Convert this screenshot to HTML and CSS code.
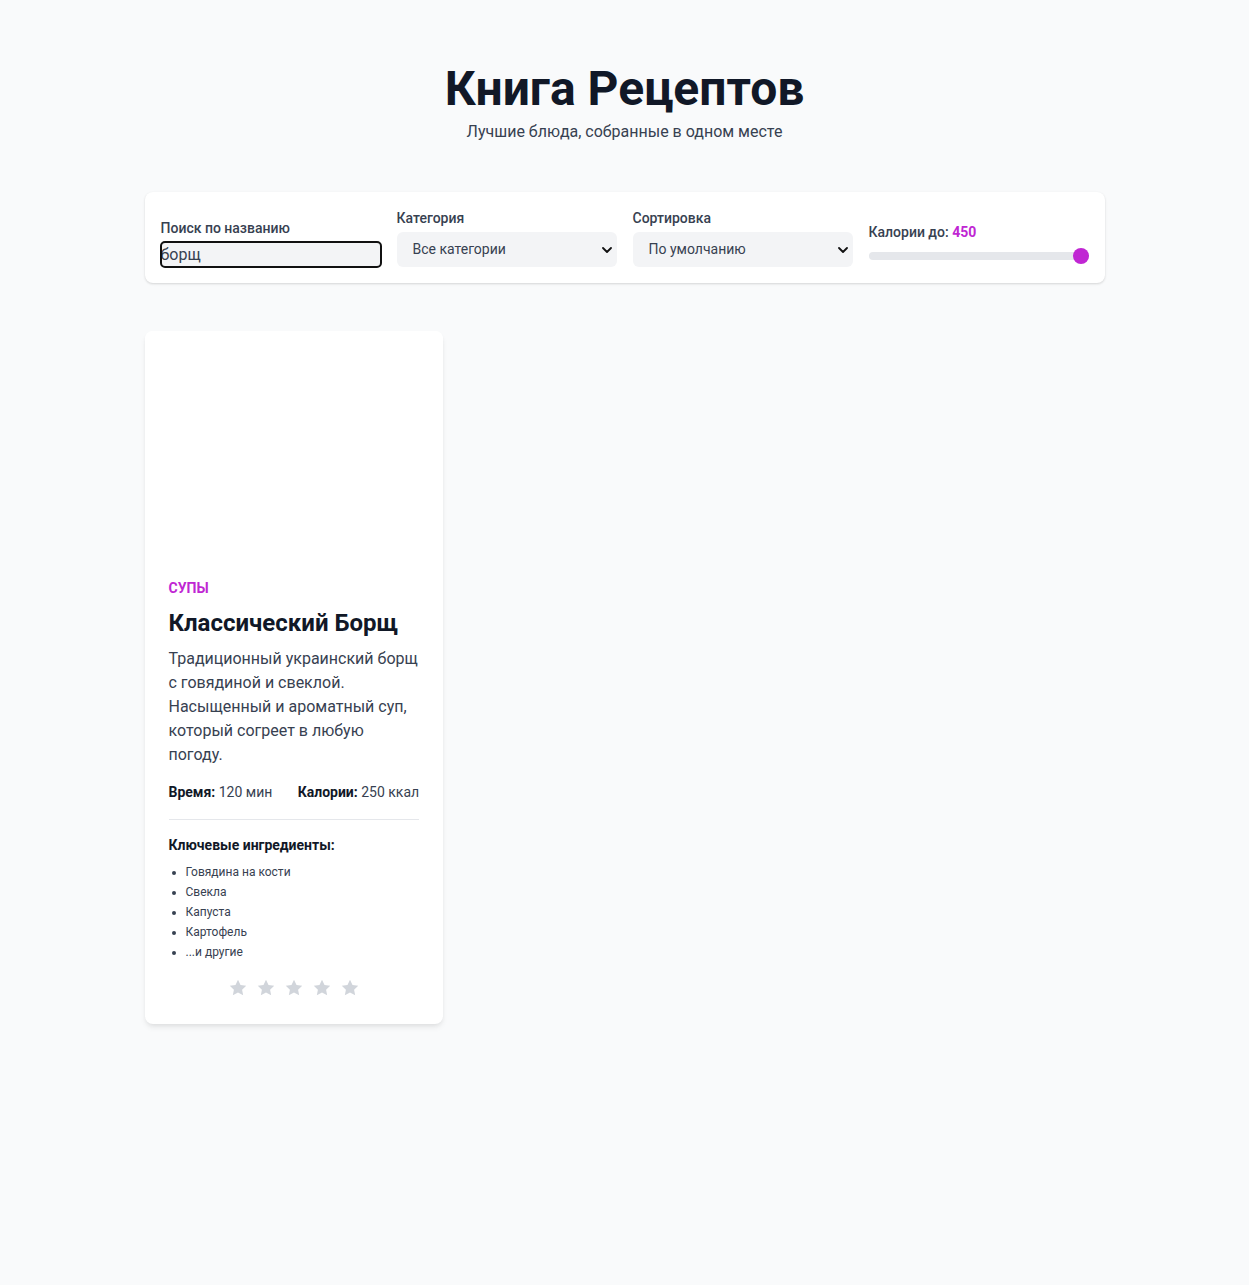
FILE: index.html
```html
<!DOCTYPE html>
<html lang="ru">
<head>
<meta charset="utf-8">
<title>Книга Рецептов</title>
<link rel="stylesheet" href="styles.css">
</head>
<body>
<div class="page">
  <header class="hero">
    <h1 class="hero-title">Книга Рецептов</h1>
    <p class="hero-sub">Лучшие блюда, собранные в одном месте</p>
  </header>

  <section class="filters">
    <div class="field">
      <label class="field-label" for="search">Поиск по названию</label>
      <input id="search" class="search-input" type="text" value="борщ">
    </div>
    <div class="field">
      <label class="field-label" for="cat">Категория</label>
      <div class="select-wrap">
        <select id="cat" class="select"><option>Все категории</option></select>
        <svg class="chev" viewBox="0 0 10 6" width="10" height="6"><path d="M1 1l4 4 4-4" fill="none" stroke="#111" stroke-width="1.8" stroke-linecap="round" stroke-linejoin="round"/></svg>
      </div>
    </div>
    <div class="field">
      <label class="field-label" for="sort">Сортировка</label>
      <div class="select-wrap">
        <select id="sort" class="select"><option>По умолчанию</option></select>
        <svg class="chev" viewBox="0 0 10 6" width="10" height="6"><path d="M1 1l4 4 4-4" fill="none" stroke="#111" stroke-width="1.8" stroke-linecap="round" stroke-linejoin="round"/></svg>
      </div>
    </div>
    <div class="field">
      <label class="field-label" for="cal">Калории до: <span class="accent">450</span></label>
      <input id="cal" class="range" type="range" min="0" max="450" value="450">
    </div>
  </section>

  <section class="grid">
    <article class="card">
      <div class="card-img"></div>
      <div class="card-body">
        <div class="card-cat">Супы</div>
        <h2 class="card-title">Классический Борщ</h2>
        <p class="card-desc">Традиционный украинский борщ с говядиной и свеклой. Насыщенный и ароматный суп, который согреет в любую погоду.</p>
        <div class="meta">
          <span><b>Время:</b> 120 мин</span>
          <span><b>Калории:</b> 250 ккал</span>
        </div>
        <div class="ingredients">
          <h3 class="ing-title">Ключевые ингредиенты:</h3>
          <ul class="ing-list">
            <li>Говядина на кости</li>
            <li>Свекла</li>
            <li>Капуста</li>
            <li>Картофель</li>
            <li>...и другие</li>
          </ul>
        </div>
        <div class="stars">
          <svg class="star" viewBox="0 0 24 24"><path d="M12 2l3 6.3 6.9.9-5 4.8 1.3 6.8L12 17.5l-6.2 3.3 1.3-6.8-5-4.8 6.9-.9z"/></svg>
          <svg class="star" viewBox="0 0 24 24"><path d="M12 2l3 6.3 6.9.9-5 4.8 1.3 6.8L12 17.5l-6.2 3.3 1.3-6.8-5-4.8 6.9-.9z"/></svg>
          <svg class="star" viewBox="0 0 24 24"><path d="M12 2l3 6.3 6.9.9-5 4.8 1.3 6.8L12 17.5l-6.2 3.3 1.3-6.8-5-4.8 6.9-.9z"/></svg>
          <svg class="star" viewBox="0 0 24 24"><path d="M12 2l3 6.3 6.9.9-5 4.8 1.3 6.8L12 17.5l-6.2 3.3 1.3-6.8-5-4.8 6.9-.9z"/></svg>
          <svg class="star" viewBox="0 0 24 24"><path d="M12 2l3 6.3 6.9.9-5 4.8 1.3 6.8L12 17.5l-6.2 3.3 1.3-6.8-5-4.8 6.9-.9z"/></svg>
        </div>
      </div>
    </article>
  </section>
</div>
</body>
</html>
```

FILE: styles.css
```css
* { box-sizing: border-box; }
html, body { margin: 0; padding: 0; }
body {
  background: #f9fafb;
  font-family: Roboto, "Liberation Sans", sans-serif;
  color: #374151;
}
.page {
  width: 960px;
  margin: 0 auto;
  padding: 48px 0 64px;
}
.hero { text-align: center; margin-bottom: 48px; }
.hero-title {
  margin: 0;
  font-size: 48px;
  line-height: 1.2;
  font-weight: 700;
  color: #111827;
  padding-top: 12px;
}
.hero-sub {
  margin: 2px 0 0;
  font-size: 16px;
  line-height: 24px;
  color: #374151;
}
.filters {
  background: #fff;
  border-radius: 8px;
  box-shadow: 0 1px 3px rgba(0,0,0,0.1), 0 1px 2px rgba(0,0,0,0.06);
  padding: 16px;
  display: grid;
  grid-template-columns: repeat(4, 1fr);
  gap: 16px;
  align-items: end;
  margin-bottom: 48px;
}
.field { display: flex; flex-direction: column; }
.field-label {
  font-size: 14px;
  line-height: 20px;
  font-weight: 500;
  color: #374151;
  margin-bottom: 4px;
}
.accent { color: #c026d3; font-weight: 700; }
.search-input {
  font-family: Roboto, "Liberation Sans", sans-serif;
  font-size: 16px;
  height: 25px;
  padding: 0;
  border: none;
  background: #f3f4f6;
  border-radius: 4px;
  outline: 2px solid #111;
  outline-offset: -1px;
  color: #374151;
}
.select-wrap { position: relative; }
.select {
  appearance: none;
  -webkit-appearance: none;
  width: 100%;
  height: 35px;
  border: none;
  border-radius: 6px;
  background: #f3f4f6;
  padding: 0 16px;
  font-family: Roboto, "Liberation Sans", sans-serif;
  font-size: 14px;
  color: #374151;
}
.chev { position: absolute; right: 5px; top: 15px; pointer-events: none; }
.range {
  -webkit-appearance: none;
  appearance: none;
  width: 100%;
  height: 8px;
  margin: 6px 0 7px;
  background: #e5e7eb;
  border-radius: 4px;
  outline: none;
}
.range::-webkit-slider-thumb {
  -webkit-appearance: none;
  width: 16px;
  height: 16px;
  border-radius: 50%;
  background: #c026d3;
  border: none;
}
.grid {
  display: grid;
  grid-template-columns: repeat(3, 1fr);
  gap: 32px;
}
.card {
  background: #fff;
  border-radius: 8px;
  box-shadow: 0 4px 6px -1px rgba(0,0,0,0.08), 0 2px 4px -1px rgba(0,0,0,0.05);
  overflow: hidden;
}
.card-img { height: 225px; background: #fff; }
.card-body { padding: 24px 24px 26px; }
.card-cat {
  font-size: 14px;
  line-height: 16px;
  font-weight: 700;
  text-transform: uppercase;
  color: #c026d3;
}
.card-title {
  margin: 11px 0 8px;
  font-size: 24px;
  line-height: 32px;
  font-weight: 700;
  color: #111827;
}
.card-desc {
  margin: 0 0 15px;
  font-size: 16px;
  line-height: 24px;
  color: #374151;
}
.meta {
  display: flex;
  justify-content: space-between;
  font-size: 14px;
  line-height: 20px;
  color: #374151;
  padding-bottom: 17px;
  border-bottom: 1px solid #e5e7eb;
}
.meta b { color: #111827; font-weight: 700; }
.ingredients { padding-top: 15px; }
.ing-title {
  margin: 0 0 7px;
  font-size: 14px;
  line-height: 20px;
  font-weight: 700;
  color: #111827;
}
.ing-list {
  margin: 0;
  padding-left: 17px;
  font-size: 12px;
  line-height: 20px;
  color: #374151;
}
.stars {
  display: flex;
  justify-content: center;
  gap: 8px;
  margin-top: 16px;
}
.star { width: 20px; height: 20px; fill: #d1d5db; }
```
